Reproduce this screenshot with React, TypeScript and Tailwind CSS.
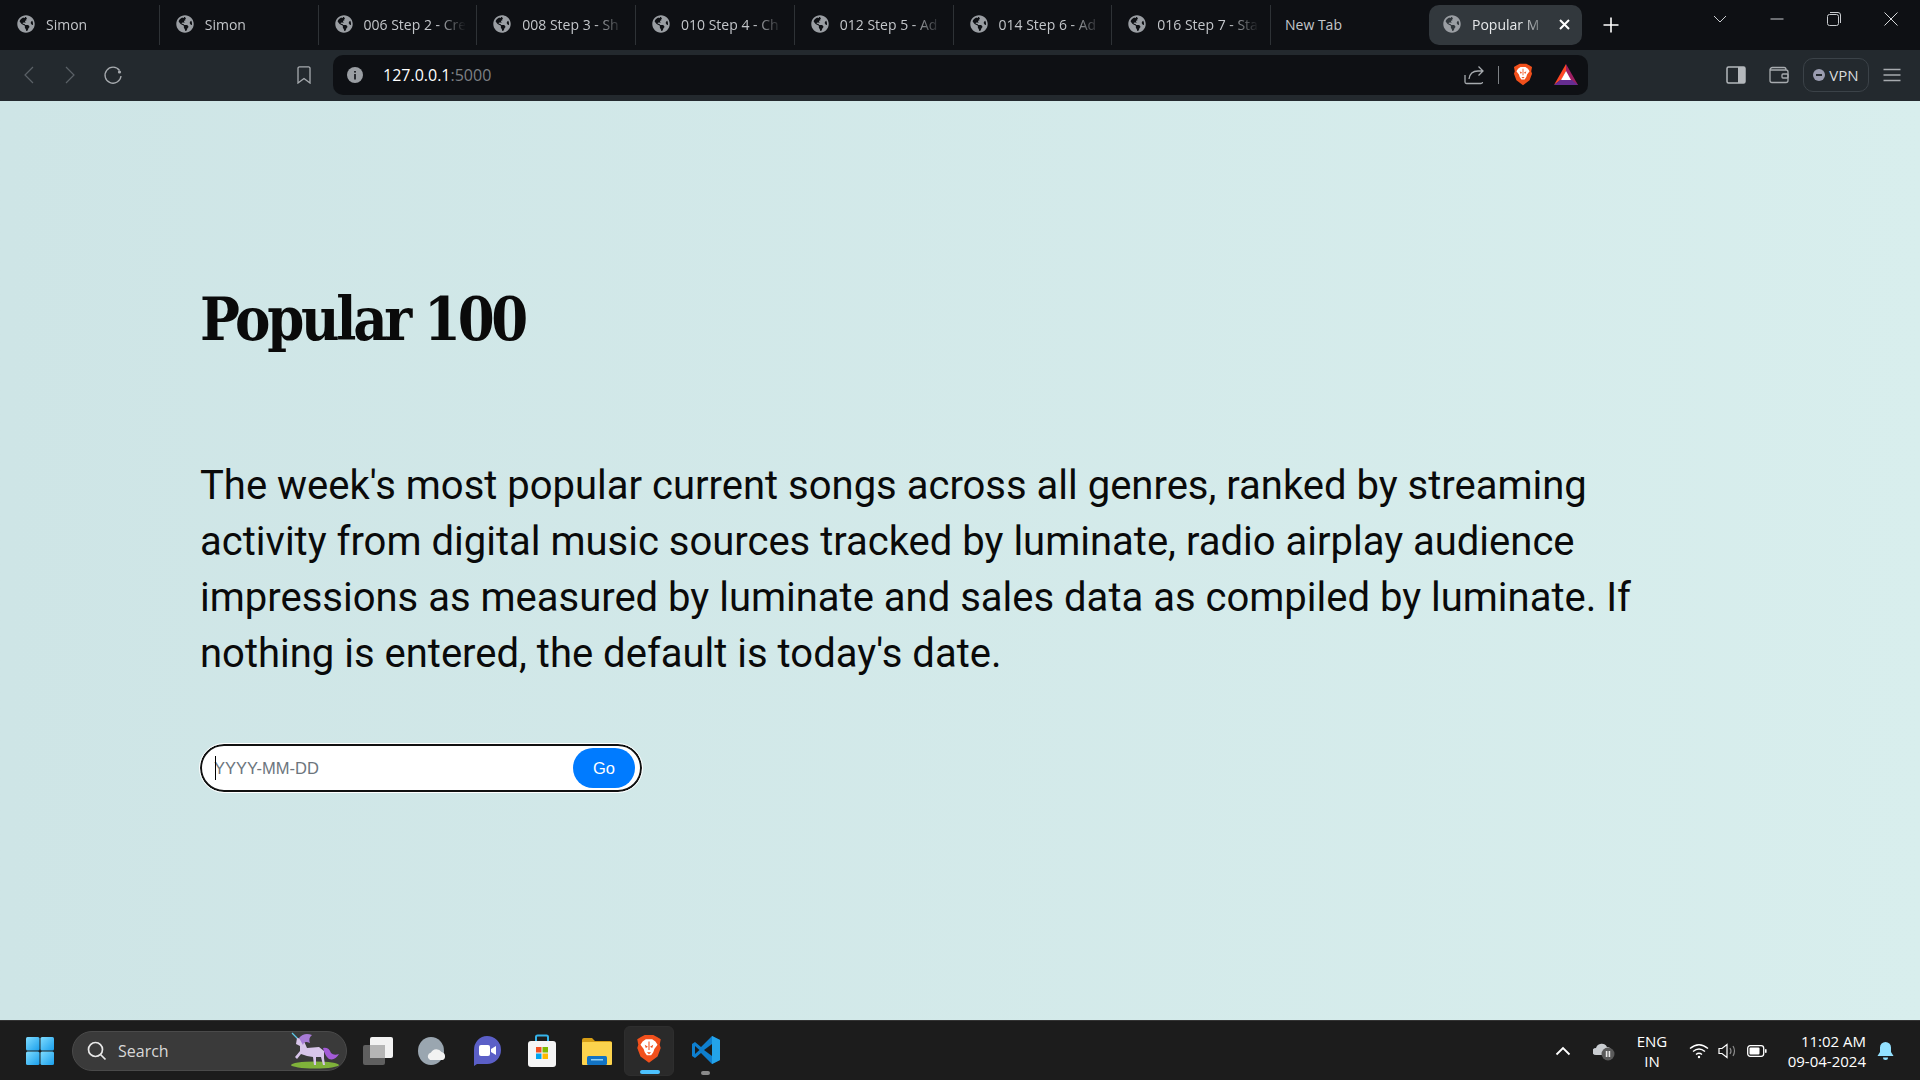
import React from 'react';
import { FaGlobeAmericas } from 'react-icons/fa';

interface ITab {
    title: string;
}

const tabs: ITab[] = [
    { title: 'Simon' },
    { title: 'Simon' },
    { title: '006 Step 2 - Cre' },
    { title: '008 Step 3 - Sh' },
    { title: '010 Step 4 - Ch' },
    { title: '012 Step 5 - Ad' },
    { title: '014 Step 6 - Ad' },
    { title: '016 Step 7 - Sta' },
];

const Tab = ({ title }: ITab): JSX.Element => (
    <div className="flex h-[40px] w-[158.75px] shrink-0 items-center border-r border-[#2e3236] pb-[2px] pl-[16px]">
        <FaGlobeAmericas className="h-[18px] w-[18px] shrink-0 text-[#9a9ea3]" />
        <div className="ml-[11px] w-[104px] overflow-hidden whitespace-nowrap text-[14px] text-[#c3c6ca] [mask-image:linear-gradient(to_right,black_70%,transparent_98%)]">
            {title}
        </div>
    </div>
);

const BraveLogo = ({ size }: { size: number }): JSX.Element => (
    <svg width={size} height={size * 1.15} viewBox="0 0 24 28">
        <path
            d="M4 3 L8 1 H16 L20 3 L23 5 L22 10 L23 13 L20 21 L12 27 L4 21 L1 13 L2 10 L1 5 Z"
            fill="#f1501c"
        />
        <path
            d="M6 7 L9 5 H15 L18 7 L20 10 L17 14 L16 17 L14 20 H10 L8 17 L7 14 L4 10 Z"
            fill="#ffffff"
        />
        <path d="M8 10 L11 12 L9 13 Z M16 10 L13 12 L15 13 Z M10 17 H14 L12 19 Z" fill="#f1501c" />
        <path d="M12 7 V15" stroke="#f1501c" strokeWidth="1" />
    </svg>
);

const BatLogo = (): JSX.Element => (
    <svg width="24" height="22" viewBox="0 0 24 22">
        <path d="M12 0 L24 21 H16 L12 13 Z" fill="#9e1f63" />
        <path d="M12 0 L0 21 L8 15 L12 7 Z" fill="#ff4724" />
        <path d="M0 21 H24 L18 16 H6 Z" fill="#662d91" />
        <path d="M12 7 L17 16 H7 Z" fill="#ffffff" />
    </svg>
);

const WindowsLogo = (): JSX.Element => (
    <svg width="30" height="30" viewBox="0 0 30 30">
        <defs>
            <linearGradient id="win" x1="0" y1="0" x2="1" y2="1">
                <stop offset="0" stopColor="#7fdcff" />
                <stop offset="1" stopColor="#1a9fec" />
            </linearGradient>
        </defs>
        <rect x="1" y="1" width="13.5" height="13.5" rx="1.5" fill="url(#win)" />
        <rect x="15.5" y="1" width="13.5" height="13.5" rx="1.5" fill="url(#win)" />
        <rect x="1" y="15.5" width="13.5" height="13.5" rx="1.5" fill="url(#win)" />
        <rect x="15.5" y="15.5" width="13.5" height="13.5" rx="1.5" fill="url(#win)" />
    </svg>
);

const Unicorn = (): JSX.Element => (
    <svg width="54" height="40" viewBox="0 0 54 40">
        <ellipse cx="27" cy="35" rx="24" ry="3.5" fill="#7fb23a" />
        <path d="M4 3 L10 9" stroke="#5cc8e8" strokeWidth="1.2" />
        <path
            d="M9 8 L15 9 L19 18 L31 17 L36 21 L36 28 L37 35 H35 L33 27 L28 27 L28 35 H26 L25 27 L19 26 L13 24 L9 29 L7 27 L12 21 L12 16 L8 14 Z"
            fill="#d8c5ea"
        />
        <path d="M11 8 Q16 2 24 5 Q20 8 22 13 Q16 10 15 15 Z" fill="#a77bd6" />
        <path d="M35 18 Q41 17 43 23 Q46 26 51 24 Q47 31 41 29 Q37 26 35 18 Z" fill="#a45bd8" />
    </svg>
);

const VsCodeLogo = (): JSX.Element => (
    <svg width="30" height="30" viewBox="0 0 30 30">
        <path d="M21 1 L29 5 V25 L21 29 L10 18 L4 23 L1 21 V9 L4 7 L10 12 Z" fill="#0e7fcf" />
        <path d="M21 1 L29 5 V25 L21 29 Z" fill="#23a3ea" />
        <path d="M21 9 L13 15 L21 21 Z" fill="#1c1c1c" />
        <path d="M4 11 L8.5 15 L4 19 Z" fill="#1c1c1c" />
    </svg>
);

const TaskbarIcons = (): JSX.Element => (
    <div className="ml-[3px] flex h-full items-center">
        <div className="flex h-[50px] w-[55px] items-center justify-center">
            <svg width="32" height="30" viewBox="0 0 32 30">
                <rect x="1" y="9" width="22" height="20" rx="2" fill="#5f5f5f" />
                <rect x="8" y="1" width="23" height="21" rx="2" fill="#f2f2f2" />
                <rect x="8" y="9" width="15" height="13" fill="#b5b5b5" />
            </svg>
        </div>
        <div className="flex h-[50px] w-[55px] items-center justify-center">
            <svg width="30" height="30" viewBox="0 0 30 30">
                <ellipse cx="13" cy="15" rx="13" ry="14" fill="#9aa6b0" />
                <path
                    d="M12 24 a4 4 0 0 1 1 -7.5 a6 6 0 0 1 10.5 -0.5 a4.2 4.2 0 0 1 1 8 Z"
                    fill="#f2f2f2"
                />
            </svg>
        </div>
        <div className="flex h-[50px] w-[54px] items-center justify-center">
            <svg width="30" height="32" viewBox="0 0 30 32">
                <path
                    d="M15 1 a14 14 0 0 1 14 14 a14 14 0 0 1 -14 14 H5 L2 31 V15 A13 14 0 0 1 15 1 Z"
                    fill="#5b5fc7"
                />
                <rect x="7" y="10" width="11" height="11" rx="2" fill="#ffffff" />
                <path d="M19 14 L24 11 V20 L19 17 Z" fill="#ffffff" />
            </svg>
        </div>
        <div className="flex h-[50px] w-[55px] items-center justify-center">
            <svg width="30" height="34" viewBox="0 0 30 34">
                <path d="M9 8 V3 a1.5 1.5 0 0 1 1.5 -1.5 H19.5 A1.5 1.5 0 0 1 21 3 V8" fill="none" stroke="#35b3ea" strokeWidth="2" />
                <rect x="1" y="7" width="28" height="26" rx="3" fill="#f5f5f5" />
                <rect x="9" y="13" width="5.5" height="5.5" fill="#f25022" />
                <rect x="15.5" y="13" width="5.5" height="5.5" fill="#7fba00" />
                <rect x="9" y="19.5" width="5.5" height="5.5" fill="#00a4ef" />
                <rect x="15.5" y="19.5" width="5.5" height="5.5" fill="#ffb900" />
            </svg>
        </div>
        <div className="flex h-[50px] w-[55px] items-center justify-center">
            <svg width="30" height="28" viewBox="0 0 30 28">
                <path d="M0 3 a2 2 0 0 1 2 -2 H10 L13 4 H28 a2 2 0 0 1 2 2 V8 H0 Z" fill="#d69e16" />
                <rect x="0" y="5" width="30" height="23" rx="1" fill="#fcd34d" />
                <rect x="5" y="19" width="20" height="9" rx="1.5" fill="#1273c4" />
                <rect x="9" y="22" width="12" height="1.5" fill="#8fd0f5" />
            </svg>
        </div>
        <div className="relative flex h-[50px] w-[50px] items-center justify-center rounded-md border border-[#2e2e2e] bg-[#2a2a2a] pb-[4px]">
            <BraveLogo size={26} />
            <div className="absolute bottom-[1px] left-[15px] h-[4px] w-[20px] rounded-full bg-[#4cc2ff]" />
        </div>
        <div className="relative flex h-[50px] w-[64px] items-center justify-center pb-[2px]">
            <VsCodeLogo />
            <div className="absolute bottom-[1px] left-[27px] h-[4px] w-[9px] rounded-full bg-[#8a8a8a]" />
        </div>
    </div>
);

const Tray = (): JSX.Element => (
    <div className="ml-auto flex h-full items-center text-white">
        <svg width="16" height="10" viewBox="0 0 16 10" fill="none" stroke="#ffffff" strokeWidth="1.8">
            <path d="M1.5 8.5 L8 2 L14.5 8.5" />
        </svg>
        <svg className="ml-[22px]" width="22" height="20" viewBox="0 0 22 20">
            <path d="M3 14 a3.5 3.5 0 0 1 0 -7 a6 6 0 0 1 11 -1 a4 4 0 0 1 4 4 L14 14 Z" fill="#c9ccd0" />
            <circle cx="15" cy="13" r="6.5" fill="#5a5a5a" />
            <rect x="12.8" y="10" width="1.6" height="6" fill="#e8e8e8" />
            <rect x="15.6" y="10" width="1.6" height="6" fill="#e8e8e8" />
        </svg>
        <div className="ml-[19px] w-[36px] text-center text-[15px] leading-[20px]">
            <div>ENG</div>
            <div>IN</div>
        </div>
        <svg className="ml-[19px]" width="20" height="16" viewBox="0 0 20 16" fill="none" stroke="#ffffff" strokeWidth="1.4">
            <path d="M1 5.5 Q10 -2 19 5.5 M4 8.5 Q10 3.5 16 8.5 M7 11.5 Q10 9 13 11.5" />
            <circle cx="10" cy="14" r="1.2" fill="#ffffff" stroke="none" />
        </svg>
        <svg className="ml-[9px]" width="20" height="16" viewBox="0 0 20 16" fill="none" stroke="#ffffff" strokeWidth="1.2">
            <path d="M1 5.5 H4 L9 1.5 V14.5 L4 10.5 H1 Z" />
            <path d="M12 5 Q14 8 12 11" stroke="#8a8a8a" />
            <path d="M15 3 Q18 8 15 13" stroke="#8a8a8a" />
        </svg>
        <svg className="ml-[9px]" width="20" height="12" viewBox="0 0 20 12" fill="none">
            <rect x="0.7" y="0.7" width="16" height="10.6" rx="2.5" stroke="#ffffff" strokeWidth="1.3" />
            <rect x="2.5" y="2.5" width="10" height="7" rx="1" fill="#ffffff" />
            <rect x="18" y="4" width="1.6" height="4" rx="0.8" fill="#ffffff" />
        </svg>
        <div className="ml-[19px] w-[80px] whitespace-nowrap text-right text-[15px] leading-[20px]">
            <div>11:02 AM</div>
            <div>09-04-2024</div>
        </div>
        <svg className="ml-[11px] mr-[26px]" width="17" height="20" viewBox="0 0 17 20">
            <path d="M8.5 1 a5.5 5.5 0 0 1 5.5 5.5 V11 L16.5 15 H0.5 L3 11 V6.5 A5.5 5.5 0 0 1 8.5 1 Z" fill="#93e1ff" />
            <path d="M6 16.5 H11 A2.5 2.5 0 0 1 6 16.5 Z" fill="#93e1ff" />
        </svg>
    </div>
);

const App = (): JSX.Element => (
    <div className="flex h-screen w-full flex-col overflow-hidden font-['Open_Sans',sans-serif]">
        {/* tab strip */}
        <div className="flex h-[50px] items-center bg-[#0e1014] pl-[1px]">
            {tabs.map((tab, index) => (
                <Tab key={index} title={tab.title} />
            ))}
            <div className="w-[158px] shrink-0 pb-[2px] pl-[14px] text-[14px] text-[#c3c6ca]">New Tab</div>
            <div className="flex h-[40px] w-[153px] shrink-0 items-center rounded-[10px] bg-[#32383d] pb-[2px] pl-[14px]">
                <FaGlobeAmericas className="h-[18px] w-[18px] shrink-0 text-[#9a9ea3]" />
                <div className="ml-[11px] w-[78px] overflow-hidden whitespace-nowrap text-[14px] text-[#e6e8ea] [mask-image:linear-gradient(to_right,black_65%,transparent_98%)]">
                    Popular M
                </div>
                <svg className="ml-[9px]" width="11" height="11" viewBox="0 0 11 11" stroke="#ffffff" strokeWidth="2">
                    <path d="M1 1 L10 10 M10 1 L1 10" />
                </svg>
            </div>
            <svg className="ml-[21px]" width="16" height="16" viewBox="0 0 16 16" stroke="#ffffff" strokeWidth="1.6">
                <path d="M8 0.5 V15.5 M0.5 8 H15.5" />
            </svg>
            <div className="ml-auto flex items-center self-start pt-[12px] pr-[22px]">
                <svg width="14" height="8" viewBox="0 0 14 8" fill="none" stroke="#c9ccd0" strokeWidth="1">
                    <path d="M1 1 L7 7 L13 1" />
                </svg>
                <svg className="ml-[43px]" width="14" height="12" viewBox="0 0 14 12" stroke="#c9ccd0" strokeWidth="1">
                    <path d="M0.5 6 H13.5" />
                </svg>
                <svg className="ml-[43px]" width="14" height="14" viewBox="0 0 14 14" fill="none" stroke="#c9ccd0" strokeWidth="1">
                    <rect x="0.5" y="2.5" width="11" height="11" rx="2" />
                    <path d="M3 0.5 H11 A2.5 2.5 0 0 1 13.5 3 V11" />
                </svg>
                <svg className="ml-[43px]" width="14" height="14" viewBox="0 0 14 14" stroke="#d6d8da" strokeWidth="1">
                    <path d="M0.5 0.5 L13.5 13.5 M13.5 0.5 L0.5 13.5" />
                </svg>
            </div>
        </div>

        {/* toolbar */}
        <div className="flex h-[51px] items-center bg-[#23292e] pb-[1px] pl-[7px]">
            <div className="flex w-[42px] justify-center">
                <svg width="11" height="18" viewBox="0 0 11 18" fill="none" stroke="#5b6167" strokeWidth="1.2">
                    <path d="M10 1 L2 9 L10 17" />
                </svg>
            </div>
            <div className="flex w-[42px] justify-center">
                <svg width="11" height="18" viewBox="0 0 11 18" fill="none" stroke="#5b6167" strokeWidth="1.2">
                    <path d="M1 1 L9 9 L1 17" />
                </svg>
            </div>
            <div className="ml-[1px] flex w-[42px] justify-center">
                <svg width="20" height="20" viewBox="0 0 20 20" fill="none" stroke="#a7abaf" strokeWidth="1.3">
                    <path d="M16.5 5.5 A8 8 0 1 0 18 11" />
                    <circle cx="16.5" cy="7" r="1.6" fill="#a7abaf" stroke="none" />
                </svg>
            </div>
            <div className="ml-[150px] flex w-[40px] justify-center">
                <svg width="14" height="18" viewBox="0 0 14 18" fill="none" stroke="#a7abaf" strokeWidth="1.3">
                    <path d="M1 2 A1.5 1.5 0 0 1 2.5 0.8 H11.5 A1.5 1.5 0 0 1 13 2 V17 L7 12.5 L1 17 Z" />
                </svg>
            </div>
            <div className="ml-[9px] flex h-[40px] w-[1255px] shrink-0 items-center rounded-[10px] bg-[#0e1014] pb-[1px] pl-[13px] pr-[10px]">
                <svg width="18" height="18" viewBox="0 0 18 18">
                    <circle cx="9" cy="9" r="8" fill="#9a9ea3" />
                    <rect x="8.2" y="8" width="1.6" height="5.5" fill="#0e1014" />
                    <rect x="8.2" y="5" width="1.6" height="1.6" fill="#0e1014" />
                </svg>
                <div className="ml-[19px] text-[16px] text-white">
                    127.0.0.1<span className="text-[#7d8185]">:5000</span>
                </div>
                <div className="ml-auto flex items-center">
                    <svg width="20" height="20" viewBox="0 0 20 20" fill="none" stroke="#a7abaf" strokeWidth="1.3">
                        <path d="M1 10 V17 A1.5 1.5 0 0 0 2.5 18.5 H17 A1.5 1.5 0 0 0 18.5 17" />
                        <path d="M5 14 Q6 6 14 6 H19 M14.5 1.5 L19 6 L14.5 10.5" />
                    </svg>
                    <div className="ml-[14px] h-[18px] w-[1px] bg-[#7d8185]" />
                    <div className="ml-[14px] flex">
                        <BraveLogo size={20} />
                    </div>
                    <div className="ml-[21px] flex">
                        <BatLogo />
                    </div>
                </div>
            </div>
            <div className="ml-[126px] flex w-[43px] justify-center">
                <svg width="20" height="18" viewBox="0 0 20 18">
                    <rect x="1" y="1" width="18" height="16" rx="1.5" fill="none" stroke="#b4b8bc" strokeWidth="1.5" />
                    <rect x="12" y="1" width="7" height="16" fill="#b4b8bc" />
                </svg>
            </div>
            <div className="flex w-[43px] justify-center">
                <svg width="20" height="18" viewBox="0 0 20 18" fill="none" stroke="#a7abaf" strokeWidth="1.3">
                    <path d="M1 4 A2.5 2.5 0 0 1 3.5 1.5 H15 A2 2 0 0 1 17 3.5 M1 4 V14.5 A2 2 0 0 0 3 16.5 H17 A2 2 0 0 0 19 14.5 V6 A2 2 0 0 0 17 4 Z" />
                    <rect x="13" y="8" width="6" height="4" rx="1" />
                </svg>
            </div>
            <div className="ml-[3px] flex h-[34px] w-[66px] items-center justify-center rounded-[10px] border border-[#3b4248]">
                <svg width="12" height="12" viewBox="0 0 12 12">
                    <circle cx="6" cy="6" r="6" fill="#9a9cb0" />
                    <rect x="3" y="5" width="6" height="2" fill="#23292e" />
                </svg>
                <span className="ml-[4px] text-[15px] text-[#d8dadc]">VPN</span>
            </div>
            <div className="ml-[3px] flex w-[40px] justify-center">
                <svg width="18" height="14" viewBox="0 0 18 14" stroke="#a7abaf" strokeWidth="1.4">
                    <path d="M0.5 1.5 H17.5 M0.5 7 H17.5 M0.5 12.5 H17.5" />
                </svg>
            </div>
        </div>

        {/* page */}
        <main className="min-h-0 flex-1 bg-gradient-to-r from-[#cee5e6] to-[#d8eeed] px-[200px] pt-[174px] text-[#0a0a0a]">
            <h1 className="font-['DejaVu_Serif',serif] text-[59px] font-bold leading-[90px] tracking-[-3.3px] [font-stretch:condensed]">
                Popular 100
            </h1>
            <p className="mt-[93px] font-['Roboto',sans-serif] text-[40px] leading-[56px]">
                The week's most popular current songs across all genres, ranked by streaming activity from digital
                music sources tracked by luminate, radio airplay audience impressions as measured by luminate and sales
                data as compiled by luminate. If nothing is entered, the default is today's date.
            </p>
            <form className="relative mt-[62px] flex h-[48px] w-[442px] items-center rounded-full border-2 border-[#111111] bg-white pl-[12px] pr-[5px] font-['Liberation_Sans',sans-serif] outline-1 outline-white">
                <input
                    type="text"
                    placeholder="YYYY-MM-DD"
                    className="min-w-0 flex-1 text-[16.5px] outline-none placeholder:text-[#6c757d]"
                />
                <div className="absolute left-[13px] top-[10px] h-[24px] w-[1px] bg-black" />
                <button type="button" className="h-[40px] w-[62px] shrink-0 rounded-full bg-[#007bff] text-[16.5px] text-white">
                    Go
                </button>
            </form>
        </main>

        {/* taskbar */}
        <div className="flex h-[60px] items-center border-t border-[#333333] bg-[#1c1c1c] pl-[25px]">
            <WindowsLogo />
            <div className="relative ml-[17px] flex h-[40px] w-[275px] items-center rounded-full border border-[#4a4a4a] bg-[#3a3a3a] pl-[14px] text-[16px] text-[#d8d8d8]">
                <svg width="20" height="20" viewBox="0 0 20 20" fill="none" stroke="#e8e8e8" strokeWidth="1.7">
                    <circle cx="8.5" cy="8.5" r="7" />
                    <path d="M13.5 13.5 L18.5 18.5" />
                </svg>
                <span className="ml-[11px]">Search</span>
                <div className="absolute right-[4px] top-[-2px]">
                    <Unicorn />
                </div>
            </div>
            <TaskbarIcons />
            <Tray />
        </div>
    </div>
);

export default App;
